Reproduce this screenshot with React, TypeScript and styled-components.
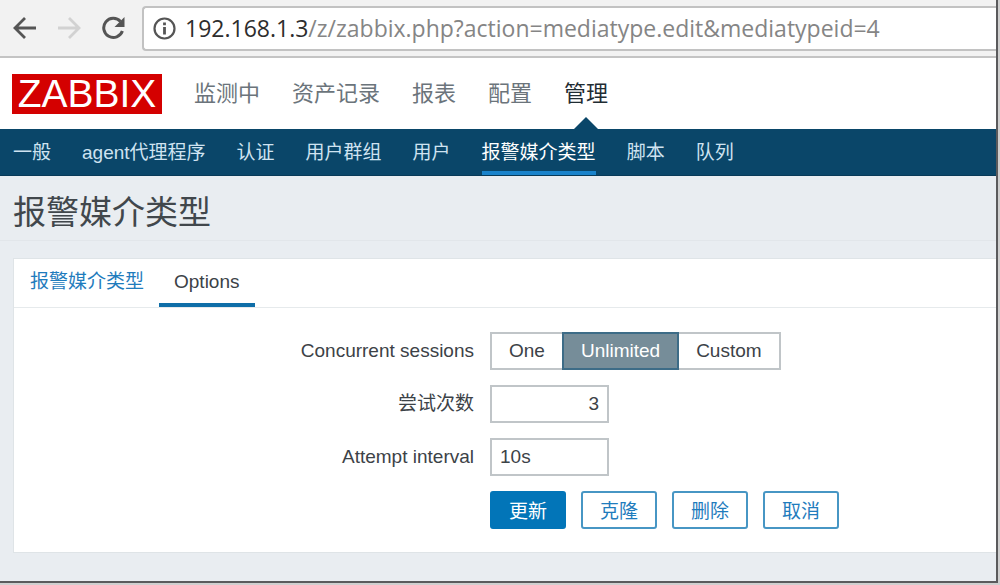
import React, { useState } from 'react';
import styled, { createGlobalStyle, css } from 'styled-components';

const uiFont = '"Liberation Sans", "Noto Sans CJK SC", sans-serif';
const barFont = '"Open Sans", "Noto Sans CJK SC", sans-serif';

const GlobalStyle = createGlobalStyle`
  *, *::before, *::after { box-sizing: border-box; }
  body {
    margin: 0;
    background: #cfcfcf;
    color: #3c4247;
    font-family: ${uiFont};
    font-size: 19px;
    line-height: 24px;
  }
  button, input { font: inherit; color: inherit; }
  a { text-decoration: none; color: inherit; }
`;

const Window = styled.div`
  display: flex;
  flex-direction: column;
  min-height: calc(100vh - 2px);
  margin-right: 2px;
  background: #e9edf1;
  border-right: 2px solid #5a5a5c;
  border-bottom: 2px solid #5a5a5c;
`;

const BrowserBar = styled.div`
  display: flex;
  align-items: center;
  height: 58px;
  padding-left: 13px;
  background: #f2f2f2;
  border-bottom: 2px solid #c4c4c4;
`;

const BarButton = styled.button<{ $dim?: boolean }>`
  display: flex;
  margin: 0 20px 0 0;
  padding: 0;
  border: 0;
  background: none;
  color: ${(p) => (p.$dim ? '#d2d2d2' : '#555')};
`;

const AddressBox = styled.div`
  display: flex;
  flex: 1;
  align-items: center;
  gap: 9px;
  height: 45px;
  margin-left: -3px;
  padding-left: 9px;
  background: #fff;
  border: 2px solid #c2c2c2;
  border-right: 0;
  border-radius: 4px 0 0 4px;
  color: #555;
  font: 23px/30px ${barFont};
  white-space: nowrap;
`;

const Host = styled.span`
  color: #2d2d2d;
`;

const Path = styled.span`
  color: #858585;
`;

const Header = styled.header`
  display: flex;
  align-items: center;
  gap: 32px;
  height: 71px;
  padding-left: 12px;
  background: #fff;
`;

const Logo = styled.a`
  width: 150px;
  height: 40px;
  background: #d40000;
  color: #fff;
  font-size: 39px;
  line-height: 40px;
  text-align: center;
`;

const MainNav = styled.nav`
  display: flex;
  align-self: stretch;
  gap: 32px;
`;

const MainLink = styled.a<{ $active?: boolean }>`
  position: relative;
  color: ${(p) => (p.$active ? '#1f2c33' : '#6b747b')};
  font-size: 22px;
  line-height: 72px;
  ${(p) =>
    p.$active &&
    css`
      &::after {
        content: '';
        position: absolute;
        bottom: 0;
        left: 50%;
        margin-left: -12px;
        border: 12px solid transparent;
        border-top: 0;
        border-bottom-color: #0a4669;
      }
    `}
`;

const SubNav = styled.nav`
  display: flex;
  gap: 31px;
  height: 47px;
  padding-left: 13px;
  background: #0a4669;
  border-bottom: 1px solid #083a58;
`;

const SubLink = styled.a<{ $active?: boolean }>`
  height: 46px;
  border-bottom: 4px solid ${(p) => (p.$active ? '#1a83cb' : 'transparent')};
  color: ${(p) => (p.$active ? '#fff' : '#cfe3f1')};
  line-height: 48px;
`;

const Title = styled.h1`
  height: 65px;
  margin: 0 0 17px;
  padding-left: 13px;
  border-bottom: 1px solid #e2e6ea;
  color: #41474c;
  font-size: 33px;
  font-weight: 400;
  line-height: 74px;
`;

const Card = styled.section`
  margin-left: 13px;
  background: #fff;
  border: 1px solid #dfe4e7;
  border-right: 0;
`;

const Tabs = styled.div`
  display: flex;
  height: 49px;
  padding-left: 1px;
  border-bottom: 1px solid #e6eaec;
`;

const Tab = styled.button<{ $active?: boolean }>`
  padding: 2px 15px 0;
  border: 0;
  border-bottom: 4px solid ${(p) => (p.$active ? '#0f6ea8' : 'transparent')};
  background: none;
  color: ${(p) => (p.$active ? '#3c4247' : '#1f7cbd')};
  line-height: 42px;
`;

const Form = styled.form`
  display: flex;
  flex-direction: column;
  gap: 15px;
  padding: 24px 0 23px;
`;

const Row = styled.div`
  display: flex;
  align-items: center;
  gap: 16px;
  height: 38px;
`;

const Label = styled.label`
  flex: 0 1 460px;
  text-align: right;
`;

const TextField = styled.input<{ $align?: string }>`
  width: 119px;
  height: 38px;
  padding: 0 8px;
  border: 2px solid #c0c5c8;
  background: #fff;
  text-align: ${(p) => p.$align || 'left'};
  outline: 0;
`;

const Segments = styled.div`
  display: flex;
`;

const SegmentInput = styled.input`
  position: absolute;
  opacity: 0;
`;

const Segment = styled.label<{ $checked: boolean }>`
  height: 38px;
  padding: 0 17px;
  border: 2px solid #c0c5c8;
  line-height: 34px;
  & + & { margin-left: -2px; }
  ${(p) =>
    p.$checked &&
    css`
      z-index: 1;
      background: #768d99;
      border-color: #3d6c87;
      color: #fff;
    `}
`;

const Actions = styled.div`
  display: flex;
  gap: 15px;
`;

const Button = styled.button<{ $primary?: boolean }>`
  height: 38px;
  padding: 3px 17px 0;
  border: 2px solid ${(p) => (p.$primary ? '#0275b8' : '#4796c4')};
  border-radius: 3px;
  background: ${(p) => (p.$primary ? '#0275b8' : '#fff')};
  color: ${(p) => (p.$primary ? '#fff' : '#1f7cbd')};
  line-height: 31px;
`;

const Arrow = ({ flip }: { flip?: boolean }) => (
  <svg width="24" height="24" viewBox="0 0 24 24" fill="none" stroke="currentColor" strokeWidth="2.8">
    {flip ? <path d="M1 12h20M12 2l10 10-10 10" /> : <path d="M23 12H3M12 2L2 12l10 10" />}
  </svg>
);

const Reload = () => (
  <svg width="24" height="24" viewBox="0 0 24 24" fill="none" stroke="currentColor" strokeWidth="3">
    <path d="M19.5 5.4A9.6 9.6 0 1 0 21.4 15" />
    <path d="M23.5 1v10h-10z" fill="currentColor" stroke="none" />
  </svg>
);

const Info = () => (
  <svg width="23" height="23" viewBox="0 0 23 23" fill="none" stroke="currentColor">
    <circle cx="11.5" cy="11.5" r="10" strokeWidth="2.2" />
    <path d="M11.5 10v7.5M11.5 5.4v2.8" strokeWidth="2.8" />
  </svg>
);

const mainItems = ['监测中', '资产记录', '报表', '配置', '管理'];
const subItems = ['一般', 'agent代理程序', '认证', '用户群组', '用户', '报警媒介类型', '脚本', '队列'];
const sessionChoices = ['One', 'Unlimited', 'Custom'];

export default function App() {
  const [sessions, setSessions] = useState('Unlimited');
  return (
    <>
      <GlobalStyle />
      <Window>
        <BrowserBar>
          <BarButton aria-label="Back"><Arrow /></BarButton>
          <BarButton aria-label="Forward" $dim><Arrow flip /></BarButton>
          <BarButton aria-label="Reload"><Reload /></BarButton>
          <AddressBox>
            <Info />
            <span>
              <Host>192.168.1.3</Host>
              <Path>/z/zabbix.php?action=mediatype.edit&amp;mediatypeid=4</Path>
            </span>
          </AddressBox>
        </BrowserBar>
        <Header>
          <Logo href="#">ZABBIX</Logo>
          <MainNav>
            {mainItems.map((item) => (
              <MainLink key={item} href="#" $active={item === '管理'}>{item}</MainLink>
            ))}
          </MainNav>
        </Header>
        <SubNav>
          {subItems.map((item) => (
            <SubLink key={item} href="#" $active={item === '报警媒介类型'}>{item}</SubLink>
          ))}
        </SubNav>
        <main>
          <Title>报警媒介类型</Title>
          <Card>
            <Tabs role="tablist">
              <Tab role="tab" aria-selected={false}>报警媒介类型</Tab>
              <Tab role="tab" aria-selected $active>Options</Tab>
            </Tabs>
            <Form onSubmit={(e) => e.preventDefault()}>
              <Row>
                <Label as="span" id="sessions-label">Concurrent sessions</Label>
                <Segments role="radiogroup" aria-labelledby="sessions-label">
                  {sessionChoices.map((choice) => (
                    <Segment key={choice} $checked={choice === sessions}>
                      <SegmentInput
                        type="radio"
                        name="sessions"
                        checked={choice === sessions}
                        onChange={() => setSessions(choice)}
                      />
                      {choice}
                    </Segment>
                  ))}
                </Segments>
              </Row>
              <Row>
                <Label htmlFor="attempts">尝试次数</Label>
                <TextField id="attempts" defaultValue="3" $align="right" />
              </Row>
              <Row>
                <Label htmlFor="interval">Attempt interval</Label>
                <TextField id="interval" defaultValue="10s" />
              </Row>
              <Row>
                <Label as="span" />
                <Actions>
                  <Button type="submit" $primary>更新</Button>
                  <Button type="button">克隆</Button>
                  <Button type="button">删除</Button>
                  <Button type="button">取消</Button>
                </Actions>
              </Row>
            </Form>
          </Card>
        </main>
      </Window>
    </>
  );
}
